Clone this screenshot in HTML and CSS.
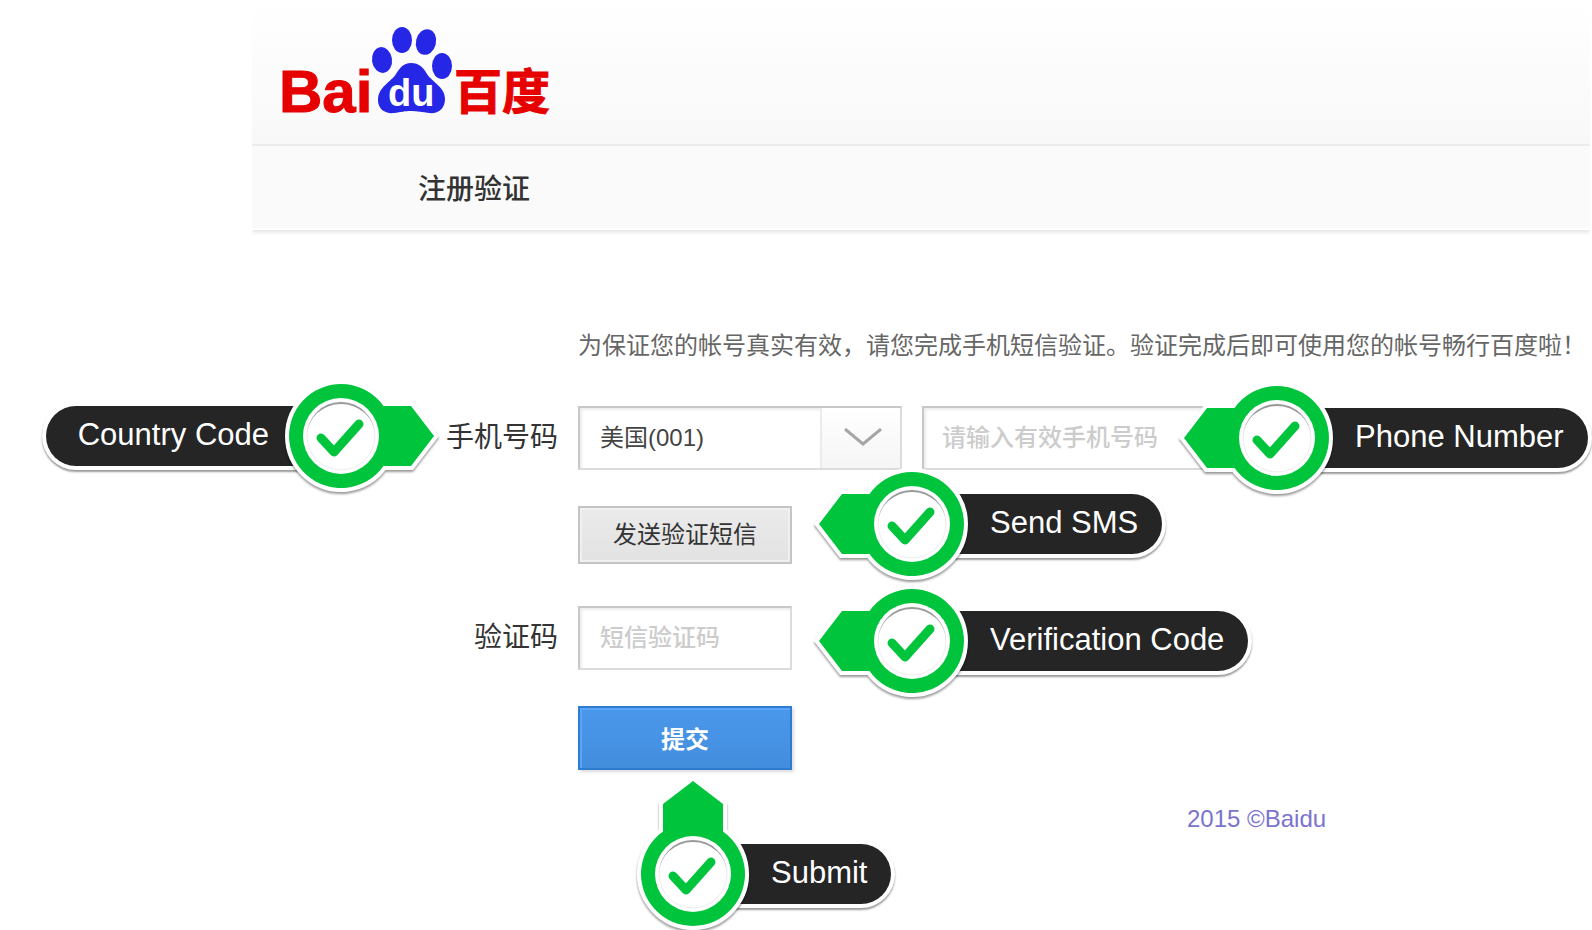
FILE: index.html
```html
<!DOCTYPE html>
<html lang="zh-CN">
<head>
<meta charset="utf-8">
<title>注册验证</title>
<link rel="stylesheet" href="styles.css">
</head>
<body>
<svg class="defs" aria-hidden="true">
  <defs>
    <path id="pin-shape" d="M42.5-30H70L93 0 70 30H42.5A52 52 0 1 1 42.5-30Z"/>
    <g id="pin-face">
      <circle class="pin-disc" r="38"/>
      <circle class="pin-groove" r="34"/>
      <path class="pin-groove-top" d="M-34 0A34 34 0 0 1 34 0 34 32 0 0 0-34 0Z"/>
      <path class="pin-tick" d="M-20 2-7 16 18-12"/>
    </g>
  </defs>
</svg>

<header class="header">
  <div class="brand">
    <svg class="logo" viewBox="276 20 280 100" role="img" aria-label="Baidu 百度">
      <text class="logo-latin" x="279" y="112">Bai</text>
      <g class="logo-paw">
        <ellipse cx="402" cy="40" rx="10" ry="13"/>
        <ellipse cx="426" cy="42" rx="10" ry="13" transform="rotate(14 426 42)"/>
        <ellipse cx="382" cy="60" rx="10" ry="13" transform="rotate(-8 382 60)"/>
        <ellipse cx="442" cy="66" rx="10" ry="13"/>
        <path d="M411 63C403 63 400 68 396 74 391 82 378 87 378 100 378 110 386 114 394 113 401 112 405 111 411 111 418 111 422 112 429 113 438 114 445 109 445 99 445 87 433 83 427 74 423 67 419 63 411 63Z"/>
      </g>
      <text class="logo-du" x="388" y="106">du</text>
      <text class="logo-cjk" x="454" y="109">百度</text>
    </svg>
  </div>
  <h1 class="title">注册验证</h1>
</header>

<main>
  <form class="form">
    <p class="intro">为保证您的帐号真实有效，请您完成手机短信验证。验证完成后即可使用您的帐号畅行百度啦！</p>

    <div class="label-cell">
      <label for="phone">手机号码</label>
      <div class="callout callout-country">
        <span class="pill pill-before">Country Code</span>
        <svg class="pin" viewBox="-58 -56 156 112" width="156" height="112" aria-hidden="true">
          <use class="pin-edge" href="#pin-shape"/><use class="pin-body" href="#pin-shape"/><use href="#pin-face"/>
        </svg>
      </div>
    </div>
    <div class="field phone-row">
      <div class="select">
        <select aria-label="国家代码"><option>美国(001)</option></select>
        <span class="select-arrow">
          <svg viewBox="0 0 38 18" width="38" height="18" aria-hidden="true"><path d="M1 1 19 16 37 1"/></svg>
        </span>
      </div>
      <input class="box phone" id="phone" type="tel" placeholder="请输入有效手机号码">
      <div class="callout callout-phone">
        <svg class="pin" viewBox="-98 -56 156 112" width="156" height="112" aria-hidden="true">
          <g transform="rotate(180)"><use class="pin-edge" href="#pin-shape"/><use class="pin-body" href="#pin-shape"/></g><use href="#pin-face"/>
        </svg>
        <span class="pill">Phone Number</span>
      </div>
    </div>

    <div class="field field-sms">
      <button class="button button-sms" type="button">发送验证短信</button>
      <div class="callout callout-sms">
        <svg class="pin" viewBox="-98 -56 156 112" width="156" height="112" aria-hidden="true">
          <g transform="rotate(180)"><use class="pin-edge" href="#pin-shape"/><use class="pin-body" href="#pin-shape"/></g><use href="#pin-face"/>
        </svg>
        <span class="pill">Send SMS</span>
      </div>
    </div>

    <div class="label-cell"><label for="code">验证码</label></div>
    <div class="field field-code">
      <input class="box code" id="code" type="text" placeholder="短信验证码">
      <div class="callout callout-code">
        <svg class="pin" viewBox="-98 -56 156 112" width="156" height="112" aria-hidden="true">
          <g transform="rotate(180)"><use class="pin-edge" href="#pin-shape"/><use class="pin-body" href="#pin-shape"/></g><use href="#pin-face"/>
        </svg>
        <span class="pill">Verification Code</span>
      </div>
    </div>

    <div class="field field-submit">
      <button class="button button-submit" type="submit">提交</button>
      <div class="callout callout-submit">
        <svg class="pin" viewBox="-58 -98 116 154" width="116" height="154" aria-hidden="true">
          <g transform="rotate(-90)"><use class="pin-edge" href="#pin-shape"/><use class="pin-body" href="#pin-shape"/></g><use href="#pin-face"/>
        </svg>
        <span class="pill">Submit</span>
      </div>
    </div>
  </form>
</main>

<footer class="footer">2015 ©Baidu</footer>
</body>
</html>
```

FILE: styles.css
```css
* {
  box-sizing: border-box;
}

body {
  min-height: 100vh;
  margin: 0;
  overflow-x: hidden;
  background: #fff;
  color: #333;
  font-family: "Liberation Sans", "Noto Sans CJK SC", sans-serif;
  font-size: 24px;
}

.defs {
  position: absolute;
  width: 0;
  height: 0;
}

/* Header */
.header {
  margin: 0 2px 0 252px;
  box-shadow: 0 2px 4px rgba(60, 40, 40, 0.14);
  clip-path: inset(0 0 -8px 0);
}

.brand {
  padding: 20px 24px 24px;
  border-bottom: 2px solid #ebebeb;
  background: linear-gradient(#fff, #f8f8f8);
}

.logo {
  display: block;
  width: 280px;
  height: 100px;
  overflow: visible;
}

.logo-latin,
.logo-cjk {
  fill: #e60000;
  stroke: #e60000;
  font-weight: 700;
}

.logo-latin {
  font-size: 60px;
  stroke-width: 1px;
}

.logo-cjk {
  font-family: "Noto Sans CJK SC", sans-serif;
  font-size: 48px;
  stroke-width: 1px;
}

.logo-paw {
  fill: #2626e6;
}

.logo-du {
  fill: #fff;
  font-size: 38px;
  font-weight: 700;
}

.title {
  margin: 0;
  padding: 24px 0 18px 166px;
  border-bottom: 2px solid #fff;
  background: #fafafa;
  font-size: 28px;
  font-weight: 500;
  line-height: 40px;
}

/* Form */
.form {
  display: grid;
  grid-template-columns: 558px minmax(0, 1fr);
  column-gap: 20px;
  padding-top: 98px;
}

.intro {
  grid-column: 2;
  margin: 0 0 42px;
  color: #666;
  line-height: 36px;
  white-space: nowrap;
}

.label-cell {
  position: relative;
  padding-top: 12px;
  font-size: 28px;
  line-height: 40px;
  text-align: right;
}

.field {
  position: relative;
  grid-column: 2;
  height: 64px;
  margin-bottom: 36px;
}

.field-sms {
  height: 58px;
  margin-bottom: 42px;
}

.field-submit {
  margin-bottom: 0;
}

.phone-row {
  display: flex;
  gap: 20px;
}

.box,
.select select {
  height: 64px;
  border: 2px solid #dcdcdc;
  border-top-color: #c8c8c8;
  border-left-color: #c8c8c8;
  border-radius: 0;
  background: #fff;
  box-shadow: inset 2px 2px 3px rgba(0, 0, 0, 0.08);
  color: #444;
  font: inherit;
}

.box {
  padding: 0 20px;
}

.box::placeholder {
  color: #ccc;
  font-weight: 500;
  opacity: 1;
}

.code {
  width: 214px;
}

.phone {
  width: 524px;
  padding-left: 18px;
}

.select {
  position: relative;
  width: 324px;
}

.select select {
  width: 100%;
  padding: 0 84px 2px 20px;
  appearance: none;
}

.select-arrow {
  position: absolute;
  top: 2px;
  right: 2px;
  bottom: 2px;
  display: grid;
  place-items: center;
  width: 80px;
  padding: 0 0 2px 4px;
  border-left: 2px solid #ebebeb;
  background: linear-gradient(#fff, #f5f5f5);
  pointer-events: none;
}

.select-arrow path {
  fill: none;
  stroke: #a6a6a6;
  stroke-width: 3;
}

.button {
  display: block;
  width: 214px;
  height: 100%;
  padding: 0 0 2px;
  font: inherit;
}

.button-sms {
  padding-bottom: 6px;
  border: 2px solid #c4c4c4;
  background: linear-gradient(#ebebeb, #e2e2e2);
  box-shadow: inset 0 0 0 2px #f0f0f0;
  color: #333;
}

.button-submit {
  border: 2px solid #2f7bd0;
  background: linear-gradient(#4a98ec, #438ddd);
  box-shadow: inset 0 2px 0 #5aa5fa, inset 2px 0 0 #5aa5fa, 2px 2px 3px rgba(0, 0, 0, 0.14);
  color: #fff;
  font-weight: 700;
}

/* Callouts laid over the form */
.callout {
  position: absolute;
  z-index: 1;
  display: flex;
  align-items: flex-end;
  pointer-events: none;
}

.pin {
  position: relative;
  z-index: 1;
  flex: none;
  overflow: visible;
  filter: drop-shadow(0 2px 1px rgba(0, 0, 0, 0.4));
}

.pin-edge {
  fill: #fff;
  stroke: #fff;
  stroke-width: 8;
}

.pin-body {
  fill: #00c53c;
}

.pin-disc {
  fill: #fff;
}

.pin-groove {
  fill: none;
  stroke: #ededed;
}

.pin-groove-top {
  fill: #999;
}

.pin-tick {
  fill: none;
  stroke: #00c53c;
  stroke-width: 9;
  stroke-linecap: round;
  stroke-linejoin: round;
}

.pill {
  height: 60px;
  margin: 0 0 26px -58px;
  padding: 0 24px 0 78px;
  border-radius: 30px;
  background: #252525;
  box-shadow: 0 0 0 4px #fff, 0 2px 2px 4px rgba(0, 0, 0, 0.4);
  color: #fff;
  font-size: 31px;
  line-height: 58px;
  white-space: nowrap;
}

.pill-before {
  margin: 0 -58px 26px 0;
  padding: 0 72px 0 32px;
}

.callout-country {
  top: -26px;
  right: 119px;
}

.callout-phone {
  top: -24px;
  left: 601px;
}

.callout-sms {
  top: -38px;
  left: 236px;
}

.callout-code {
  top: -21px;
  left: 236px;
}

.callout-submit {
  top: 70px;
  left: 57px;
}

.footer {
  padding: 34px 0 0 1187px;
  color: #7b73cc;
  line-height: 30px;
}
```
